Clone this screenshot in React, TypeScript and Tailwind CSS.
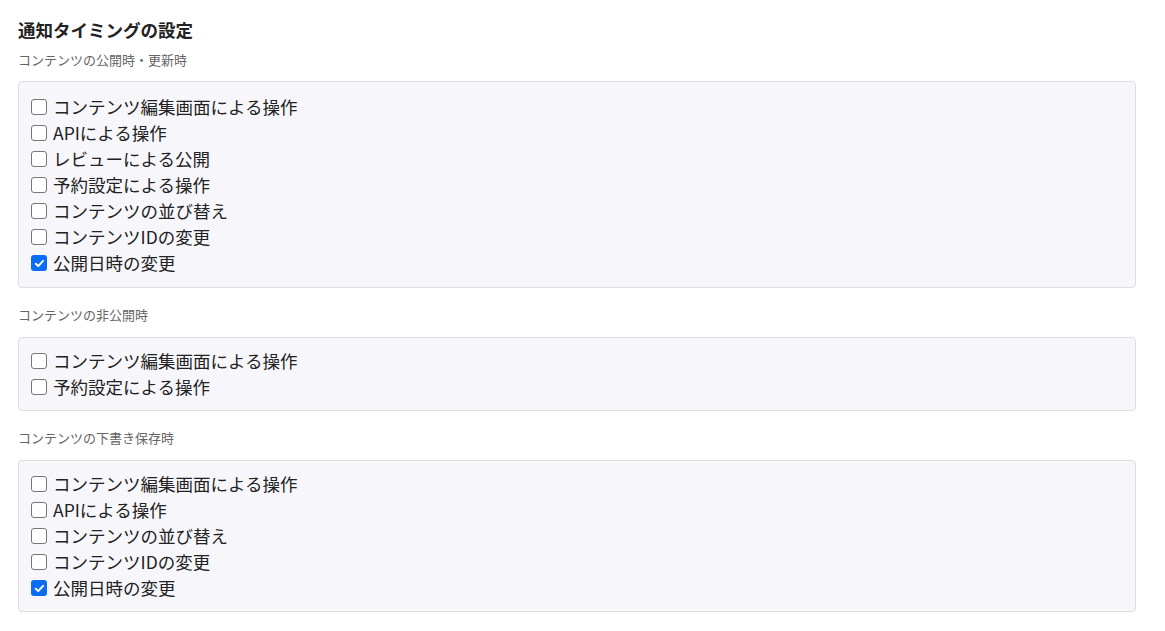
const sections = [
  {
    label: 'コンテンツの公開時・更新時',
    items: [
      { text: 'コンテンツ編集画面による操作', checked: false },
      { text: 'APIによる操作', checked: false },
      { text: 'レビューによる公開', checked: false },
      { text: '予約設定による操作', checked: false },
      { text: 'コンテンツの並び替え', checked: false },
      { text: 'コンテンツIDの変更', checked: false },
      { text: '公開日時の変更', checked: true },
    ],
  },
  {
    label: 'コンテンツの非公開時',
    items: [
      { text: 'コンテンツ編集画面による操作', checked: false },
      { text: '予約設定による操作', checked: false },
    ],
  },
  {
    label: 'コンテンツの下書き保存時',
    items: [
      { text: 'コンテンツ編集画面による操作', checked: false },
      { text: 'APIによる操作', checked: false },
      { text: 'コンテンツの並び替え', checked: false },
      { text: 'コンテンツIDの変更', checked: false },
      { text: '公開日時の変更', checked: true },
    ],
  },
];

function CheckItem({ text, checked }: { text: string; checked: boolean }) {
  return (
    <label className="flex h-[26px] items-center gap-[6px]">
      {checked ? (
        <span className="flex h-4 w-4 shrink-0 items-center justify-center rounded-[3px] bg-[#0b6cf5]">
          <svg viewBox="0 0 16 16" className="h-[13px] w-[13px]" fill="none">
            <path d="M3.5 8.3l2.9 2.9 6-6.4" stroke="#fff" strokeWidth="2.4" strokeLinecap="round" strokeLinejoin="round" />
          </svg>
        </span>
      ) : (
        <span className="h-4 w-4 shrink-0 rounded-[3px] border border-[#767676] bg-white" />
      )}
      <span className="text-[17.5px] leading-[26px] text-[#222]">{text}</span>
    </label>
  );
}

export default function App() {
  return (
    <div
      className="min-h-[631px] bg-white pl-[18px] pr-[29px] pt-[18px]"
      style={{ fontFamily: '"Noto Sans CJK JP", "Noto Sans", sans-serif' }}
    >
      <h2 className="text-[17.5px] font-bold leading-6 text-[#222]">通知タイミングの設定</h2>
      {sections.map((section, i) => (
        <section key={section.label} className={i === 0 ? 'mt-2' : 'mt-[17px]'}>
          <p className="text-[13px] leading-5 text-[#666]">{section.label}</p>
          <div
            className={
              i === 0
                ? 'mt-[11px] rounded-[4px] border border-[#dedee3] bg-[#f7f7fb] px-3 pt-3 pb-[11px]'
                : 'mt-[12px] rounded-[4px] border border-[#dedee3] bg-[#f7f7fb] px-3 py-[10px]'
            }
          >
            {section.items.map((item) => (
              <CheckItem key={item.text} text={item.text} checked={item.checked} />
            ))}
          </div>
        </section>
      ))}
    </div>
  );
}
